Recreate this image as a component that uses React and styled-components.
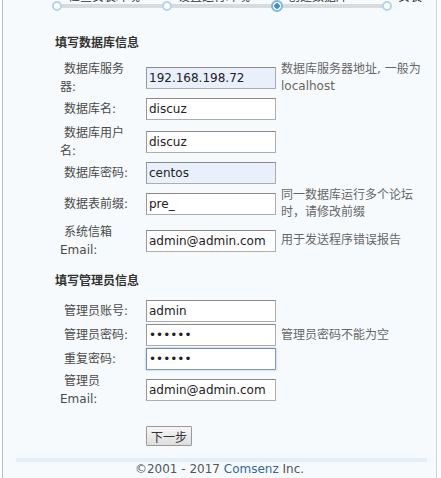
import React from 'react';
import styled, { createGlobalStyle } from 'styled-components';

const Global = createGlobalStyle`
  html, body {
    margin: 0;
    padding: 0;
    background: #fff;
    overflow: hidden;
  }
  body {
    font-family: "DejaVu Sans", Verdana, "Noto Sans CJK SC", sans-serif;
    font-size: 12px;
    color: #444;
  }
`;

const Page = styled.div`
  margin-left: 2px;
  width: 433px;
  min-height: 520px;
  background: #f6fafd;
  border-left: 1px solid #b9bcbf;
  border-right: 1px solid #c9d3db;
`;

const Steps = {
  Bar: styled.div`
    display: flex;
    margin: -11px 0 0 49px;
  `,
  Item: styled.div`
    width: ${p => (p.$last ? 'auto' : '110px')};
    display: flex;
    flex-direction: column;
  `,
  Label: styled.div`
    line-height: 14px;
    height: 14px;
    padding-left: 16px;
    white-space: nowrap;
    font-family: "Noto Sans CJK SC", sans-serif;
    color: #333;
  `,
  Track: styled.div`
    display: flex;
    align-items: center;
    height: 10px;
    margin-top: -2px;
  `,
  Dot: styled.span`
    box-sizing: border-box;
    flex: none;
    width: ${p => (p.$active ? '12px' : '10px')};
    height: ${p => (p.$active ? '12px' : '10px')};
    margin: ${p => (p.$active ? '0 -1px' : '0')};
    border-radius: 50%;
    border: 2px solid ${p => (p.$active ? '#7fb6e4' : '#b5d4ee')};
    background: ${p => (p.$active ? 'radial-gradient(circle, #3f8fd2 0 2.5px, #fff 3px)' : '#fff')};
    position: relative;
    z-index: 1;
  `,
  Line: styled.span`
    flex: 1;
    height: 4px;
    margin: 0 -2px;
    background: #d8dadd;
  `,
};

const Form = styled.div`
  padding: 22px 0 0 52px;
`;

const Title = styled.h3`
  margin: ${p => p.$top || '0'} 0 0;
  font-family: "Noto Sans CJK SC", sans-serif;
  font-size: 12px;
  line-height: 18px;
  font-weight: bold;
  color: #333;
`;

const Table = styled.div`
  margin: ${p => p.$top} 0 0 5px;
`;

const Row = styled.div`
  display: grid;
  grid-template-columns: 86px 135px 142px;
  align-items: center;
  height: ${p => p.$h}px;
`;

const Label = styled.div`
  padding-right: 12px;
  text-indent: 4px;
  line-height: 18px;
  color: #4a4a4a;
`;

const Input = styled.input`
  box-sizing: border-box;
  width: 130px;
  height: 22px;
  margin: 0;
  padding: 0 2px;
  font-family: "DejaVu Sans", Verdana, sans-serif;
  font-size: 12px;
  color: #222;
  background: ${p => (p.$fill ? '#e9f0fb' : '#fff')};
  border: 1px solid ${p => (p.$focus ? '#7e9cc0' : '#adadad')};
  border-top-color: ${p => (p.$focus ? '#6f8fb8' : '#8a8a8a')};
  border-left-color: ${p => (p.$focus ? '#6f8fb8' : '#999')};
  box-shadow: ${p => (p.$focus ? '0 0 2px #9bbbe0' : 'none')};
  outline: none;
`;

const Hint = styled.div`
  line-height: 17px;
  color: #666;
`;

const Submit = styled.div`
  padding: 17px 0 0 91px;
`;

const Button = styled.button`
  height: 20px;
  width: 46px;
  padding: 0;
  font-family: "Noto Sans CJK SC", sans-serif;
  font-size: 12px;
  color: #333;
  background: linear-gradient(#f6f6f6, #dedede);
  border: 1px solid #9a9a9a;
  border-radius: 1px;
`;

const Footer = {
  Band: styled.div`
    margin: 12px 9px 0 13px;
    height: 4px;
    background: #e2eff8;
  `,
  Text: styled.p`
    margin: 0;
    text-align: center;
    line-height: 14px;
    color: #555;
  `,
  Link: styled.a`
    color: #3366a8;
    text-decoration: none;
  `,
};

const steps = ['检查安装环境', '设置运行环境', '创建数据库', '安装'];

const dbRows = [
  { h: 34, label: '数据库服务器:', value: '192.168.198.72', fill: true, hint: '数据库服务器地址, 一般为 localhost' },
  { h: 30, label: '数据库名:', value: 'discuz' },
  { h: 34, label: '数据库用户名:', value: 'discuz' },
  { h: 29, label: '数据库密码:', value: 'centos', fill: true },
  { h: 34, label: '数据表前缀:', value: 'pre_', hint: '同一数据库运行多个论坛时，请修改前缀' },
  { h: 39, label: '系统信箱 Email:', value: 'admin@admin.com', hint: '用于发送程序错误报告' },
];

const adminRows = [
  { h: 24, label: '管理员账号:', value: 'admin' },
  { h: 24, label: '管理员密码:', value: 'aaaaaa', type: 'password', hint: '管理员密码不能为空' },
  { h: 24, label: '重复密码:', value: 'aaaaaa', type: 'password', focus: true },
  { h: 38, label: '管理员 Email:', value: 'admin@admin.com' },
];

function Rows({ rows }) {
  return rows.map(r => (
    <Row key={r.label} $h={r.h}>
      <Label>{r.label}</Label>
      <Input
        type={r.type || 'text'}
        defaultValue={r.value}
        $fill={r.fill}
        $focus={r.focus}
      />
      <Hint>{r.hint}</Hint>
    </Row>
  ));
}

export default function App() {
  return (
    <>
      <Global />
      <Page>
        <Steps.Bar>
          {steps.map((s, i) => (
            <Steps.Item key={s} $last={i === steps.length - 1}>
              <Steps.Label>{s}</Steps.Label>
              <Steps.Track>
                <Steps.Dot $active={i === 2} />
                {i < steps.length - 1 && <Steps.Line />}
              </Steps.Track>
            </Steps.Item>
          ))}
        </Steps.Bar>
        <Form>
          <Title>填写数据库信息</Title>
          <Table $top="9px">
            <Rows rows={dbRows} />
          </Table>
          <Title $top="11px">填写管理员信息</Title>
          <Table $top="10px">
            <Rows rows={adminRows} />
          </Table>
          <Submit>
            <Button>下一步</Button>
          </Submit>
        </Form>
        <Footer.Band />
        <Footer.Text>
          ©2001 - 2017 <Footer.Link href="#">Comsenz</Footer.Link> Inc.
        </Footer.Text>
      </Page>
    </>
  );
}
